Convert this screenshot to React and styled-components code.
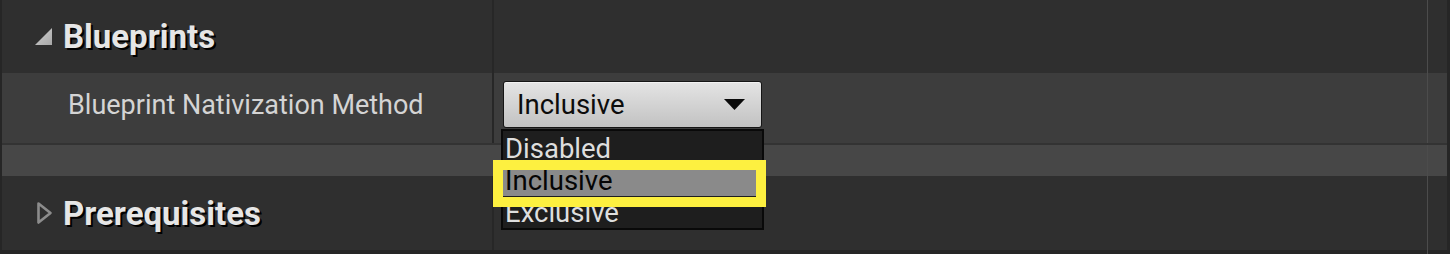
import React from 'react';
import styled, { createGlobalStyle } from 'styled-components';

const GlobalStyle = createGlobalStyle`
  html, body {
    margin: 0;
    padding: 0;
    background: #262626;
  }
  body {
    font-family: Roboto, "Noto Sans", "Liberation Sans", sans-serif;
  }
`

const Panel = styled.div`
  position: relative;
  width: 1450px;
  height: 254px;
  background: #262626;
  display: flex;
  flex-direction: column;
  padding-left: 2px;
  padding-right: 3px;
  box-sizing: border-box;
  overflow: hidden;
`

const Row = styled.div`
  display: flex;
  height: ${props => props.height}px;
  background: ${props => props.bg};
  ${props => props.borderBottom && `
    border-bottom: ${props.borderBottom};
  `}
  box-sizing: border-box;
`

const NameCell = styled.div`
  width: 490px;
  display: flex;
  align-items: center;
  padding-left: ${props => props.indent}px;
  padding-bottom: ${props => props.lift || 0}px;
  box-sizing: border-box;
`

const ValueCell = styled.div`
  flex: 1;
  display: flex;
  align-items: flex-start;
  border-left: 2px solid #272727;
  padding-left: 9px;
  padding-top: ${props => props.padTop || 0}px;
`

const Gutter = styled.div`
  width: 19px;
  border-left: 1px solid #4c4c4c;
`

const Spacer = styled.div`
  flex: 1;
`

const HeaderTitle = styled.span`
  font-size: 33px;
  font-weight: 700;
  color: #e6e6e6;
  text-shadow: 2px 2px 0 #000;
  margin-left: 10px;
`

const PropLabel = styled.span`
  font-size: 27px;
  color: #d4d4d4;
`

const Arrow = styled.svg`
  width: ${props => props.w}px;
  height: ${props => props.h}px;
  flex-shrink: 0;
`

const Combo = styled.div`
  width: 259px;
  height: 47px;
  box-sizing: border-box;
  border: 1px solid #151515;
  border-radius: 3px;
  background: linear-gradient(#e4e4e4, #c2c2c2);
  box-shadow: inset 0 1px 0 #f2f2f2;
  display: flex;
  align-items: center;
  justify-content: space-between;
  padding: 0 16px 0 13px;
`

const ComboText = styled.span`
  font-size: 27.5px;
  color: #0c0c0c;
`

const Menu = styled.div`
  position: absolute;
  left: 501px;
  top: 129px;
  width: 263px;
  height: 101px;
  box-sizing: border-box;
  background: #1e1e1e;
  border: 2px solid #090909;
  display: flex;
  flex-direction: column;
  padding-top: 1px;
`

const MenuItem = styled.div`
  height: 32px;
  display: flex;
  align-items: center;
  padding-left: 2px;
  font-size: 27.5px;
  color: ${props => props.selected ? '#050505' : '#dedede'};
  background: ${props => props.selected ? '#8a8a8a' : 'transparent'};
`

const Highlight = styled.div`
  position: absolute;
  left: 493px;
  top: 160px;
  width: 273px;
  height: 47px;
  box-sizing: border-box;
  border: 10px solid #fdf040;
`

const ExpandedIcon = () => (
  <Arrow w={18} h={20} viewBox="0 0 18 20">
    <defs>
      <linearGradient id="tri" x1="0" y1="0" x2="1" y2="1">
        <stop offset="0" stopColor="#d0d0d0" />
        <stop offset="1" stopColor="#a8a8a8" />
      </linearGradient>
    </defs>
    <polygon points="0,18 17,1 17,18" fill="url(#tri)" />
  </Arrow>
)

const CollapsedIcon = () => (
  <Arrow w={17} h={24} viewBox="0 0 17 24">
    <polygon points="2.5,2.5 14.5,12 2.5,21.5" fill="none" stroke="#8c8c8c" strokeWidth="2.6" strokeLinejoin="round" />
  </Arrow>
)

const DownArrow = () => (
  <svg width="21" height="11" viewBox="0 0 21 11">
    <polygon points="0,0 21,0 10.5,11" fill="#0a0a0a" />
  </svg>
)

const options = ['Disabled', 'Inclusive', 'Exclusive'];

export default function App() {
  const selected = 'Inclusive';

  return (
    <>
      <GlobalStyle />
      <Panel>
        <Row height={73} bg="#2f2f2f">
          <NameCell indent={33}>
            <ExpandedIcon />
            <HeaderTitle>Blueprints</HeaderTitle>
          </NameCell>
          <ValueCell />
          <Gutter />
        </Row>
        <Row height={72} bg="#3d3d3d" borderBottom="2px solid #333333">
          <NameCell indent={66} lift={6}>
            <PropLabel>Blueprint Nativization Method</PropLabel>
          </NameCell>
          <ValueCell padTop={8}>
            <Combo>
              <ComboText>{selected}</ComboText>
              <DownArrow />
            </Combo>
          </ValueCell>
          <Gutter />
        </Row>
        <Row height={31} bg="#474747">
          <Spacer />
          <Gutter />
        </Row>
        <Row height={74} bg="#2f2f2f">
          <NameCell indent={34}>
            <CollapsedIcon />
            <HeaderTitle>Prerequisites</HeaderTitle>
          </NameCell>
          <ValueCell />
          <Gutter />
        </Row>
        <Row height={4} bg="#262626">
          <Spacer />
          <Gutter />
        </Row>

        <Menu>
          {options.map(opt => (
            <MenuItem key={opt} selected={opt === selected}>{opt}</MenuItem>
          ))}
        </Menu>
        <Highlight />
      </Panel>
    </>
  );
}
